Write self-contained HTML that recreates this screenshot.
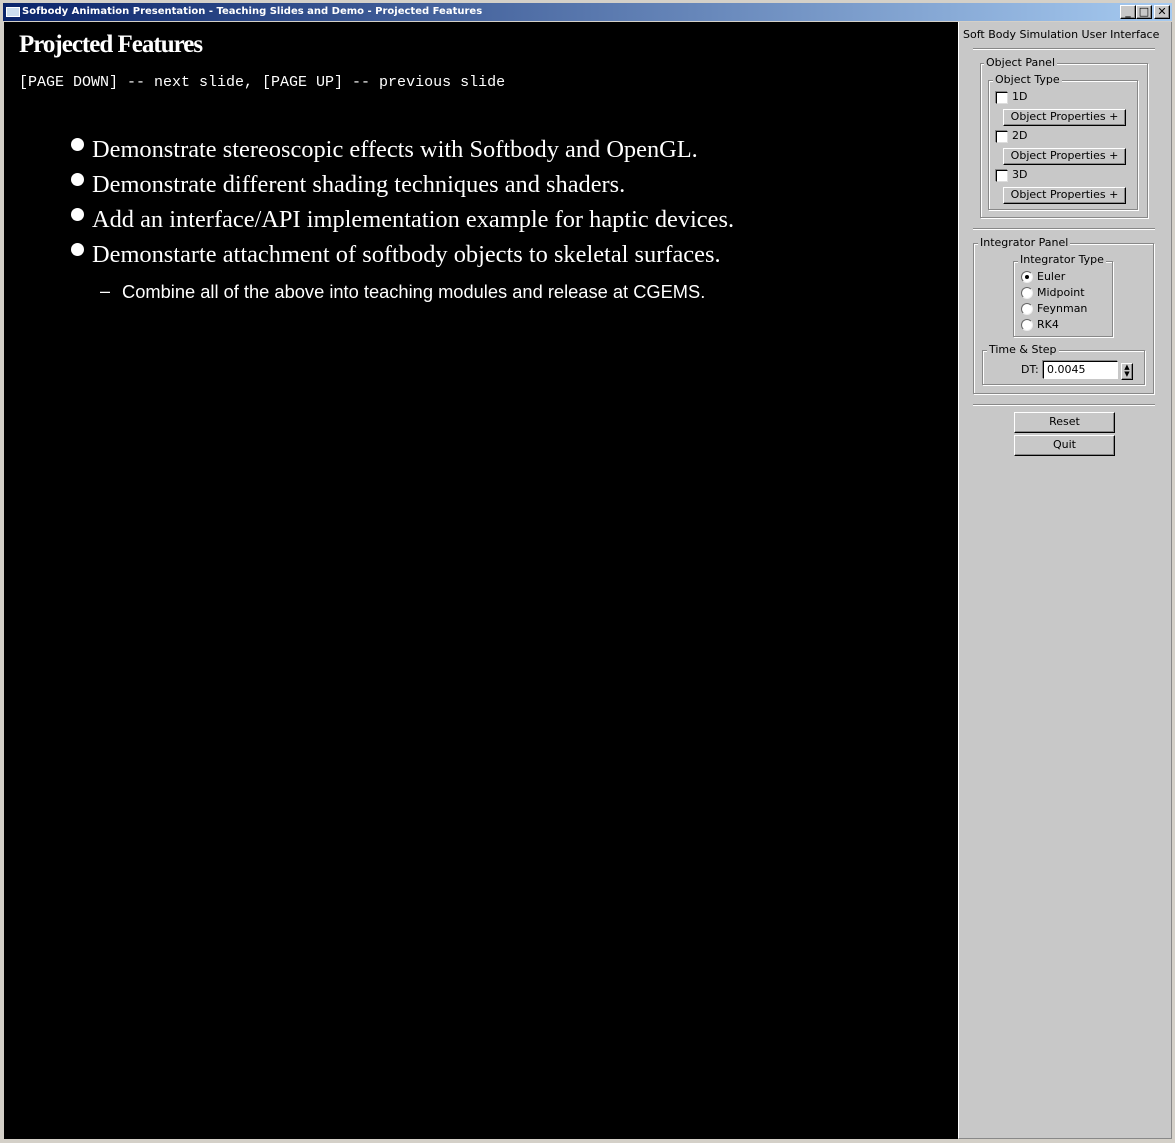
<!DOCTYPE html>
<html><head><meta charset="utf-8"><style>
*{margin:0;padding:0;box-sizing:border-box}
body{width:1175px;height:1143px;background:#d4d0c8;position:relative;overflow:hidden;font-family:"Liberation Sans",sans-serif}
.a{position:absolute}
.t{font-family:"DejaVu Sans",sans-serif;font-size:11px;color:#000;white-space:nowrap}
.fs{position:absolute;border:1px solid #888;box-shadow:1px 1px 0 #fff,inset 1px 1px 0 #fff}
.lg{position:absolute;background:#c8c8c8;padding:0 2px;font-family:"DejaVu Sans",sans-serif;font-size:11px;line-height:12px;white-space:nowrap}
.cb{position:absolute;width:12px;height:12px;background:#fff;border:1px solid #000;border-right-color:#ddd;border-bottom-color:#ddd;box-shadow:-1px -1px 0 #888}
.btn{position:absolute;background:#c8c8c8;border:1px solid;border-color:#fff #000 #000 #fff;box-shadow:inset -1px -1px 0 #888;font-family:"DejaVu Sans",sans-serif;font-size:11px;text-align:center;line-height:18px;white-space:nowrap}
.rd{position:absolute;width:12px;height:12px;border-radius:50%;background:#fff;border:1px solid #666;border-right-color:#eee;border-bottom-color:#eee}
.b{position:absolute;color:#fff;font-family:"Liberation Serif",serif;font-size:24.4px;white-space:nowrap}
.dot{position:absolute;width:13px;height:13px;border-radius:50%;background:#fff}
</style></head><body>
<div class="a" style="left:3px;top:3px;width:1169px;height:18px;background:linear-gradient(90deg,#0a246a,#a6caf0)"></div>
<div class="a" style="left:6px;top:7px;width:14px;height:10px;background:#cde;border:1px solid #fff"></div>
<div class="a" style="left:22px;top:6px;color:#fff;font-family:'DejaVu Sans',sans-serif;font-weight:bold;font-size:10px;white-space:nowrap">Sofbody Animation Presentation - Teaching Slides and Demo - Projected Features</div>
<div class="btn" style="left:1120px;top:5px;width:16px;height:14px;line-height:12px;font-weight:bold">_</div>
<div class="btn" style="left:1136px;top:5px;width:16px;height:14px;line-height:12px">□</div>
<div class="btn" style="left:1154px;top:5px;width:16px;height:14px;line-height:12px;font-weight:bold">✕</div>
<div class="a" style="left:4px;top:22px;width:954px;height:1117px;background:#000"></div>
<div class="a" style="left:958px;top:22px;width:214px;height:1117px;background:#c8c8c8;border-left:1px solid #fff;border-right:1px solid #888;border-bottom:1px solid #888"></div>
<div class="a" style="left:19px;top:31px;color:#fff;font-family:'Liberation Serif',serif;font-weight:bold;font-size:25px;letter-spacing:-1px;white-space:nowrap">Projected Features</div>
<div class="a" style="left:19px;top:74px;color:#fff;font-family:'Liberation Mono',monospace;font-size:15px;white-space:nowrap">[PAGE DOWN] -- next slide, [PAGE UP] -- previous slide</div>
<div class="dot" style="left:71px;top:138px"></div><div class="b" style="left:92px;top:136px">Demonstrate stereoscopic effects with Softbody and OpenGL.</div>
<div class="dot" style="left:71px;top:173px"></div><div class="b" style="left:92px;top:171px">Demonstrate different shading techniques and shaders.</div>
<div class="dot" style="left:71px;top:208px"></div><div class="b" style="left:92px;top:206px">Add an interface/API implementation example for haptic devices.</div>
<div class="dot" style="left:71px;top:243px"></div><div class="b" style="left:92px;top:241px">Demonstarte attachment of softbody objects to skeletal surfaces.</div>
<div class="a" style="left:100px;top:281px;color:#fff;font-size:18px;white-space:nowrap">–</div>
<div class="a" style="left:122px;top:281px;color:#fff;font-size:18.3px;white-space:nowrap">Combine all of the above into teaching modules and release at CGEMS.</div>

<div class="t a" style="left:963px;top:28px">Soft Body Simulation User Interface</div>
<div class="a" style="left:973px;top:48px;width:182px;height:2px;border-top:1px solid #888;border-bottom:1px solid #fff"></div>
<div class="fs" style="left:980px;top:63px;width:168px;height:155px"></div>
<div class="lg" style="left:984px;top:57px">Object Panel</div>
<div class="fs" style="left:988px;top:80px;width:150px;height:130px"></div>
<div class="lg" style="left:993px;top:74px">Object Type</div>
<div class="cb" style="left:996px;top:92px"></div><div class="t a" style="left:1012px;top:90px">1D</div>
<div class="btn" style="left:1003px;top:109px;width:123px;height:17px;line-height:14px">Object Properties +</div>
<div class="cb" style="left:996px;top:131px"></div><div class="t a" style="left:1012px;top:129px">2D</div>
<div class="btn" style="left:1003px;top:148px;width:123px;height:17px;line-height:14px">Object Properties +</div>
<div class="cb" style="left:996px;top:170px"></div><div class="t a" style="left:1012px;top:168px">3D</div>
<div class="btn" style="left:1003px;top:187px;width:123px;height:17px;line-height:14px">Object Properties +</div>
<div class="a" style="left:973px;top:228px;width:182px;height:2px;border-top:1px solid #888;border-bottom:1px solid #fff"></div>
<div class="fs" style="left:973px;top:243px;width:181px;height:151px"></div>
<div class="lg" style="left:978px;top:237px">Integrator Panel</div>
<div class="fs" style="left:1013px;top:261px;width:100px;height:76px"></div>
<div class="lg" style="left:1018px;top:254px">Integrator Type</div>
<div class="rd" style="left:1021px;top:271px"></div><div class="a" style="left:1025px;top:275px;width:4px;height:4px;background:#000;border-radius:50%"></div><div class="t a" style="left:1037px;top:270px">Euler</div>
<div class="rd" style="left:1021px;top:287px"></div><div class="t a" style="left:1037px;top:286px">Midpoint</div>
<div class="rd" style="left:1021px;top:303px"></div><div class="t a" style="left:1037px;top:302px">Feynman</div>
<div class="rd" style="left:1021px;top:319px"></div><div class="t a" style="left:1037px;top:318px">RK4</div>
<div class="fs" style="left:982px;top:350px;width:163px;height:35px"></div>
<div class="lg" style="left:987px;top:344px">Time &amp; Step</div>
<div class="t a" style="left:1021px;top:363px">DT:</div>
<div class="a t" style="left:1043px;top:361px;width:75px;height:18px;background:#fff;border:1px solid #000;border-right-color:#fff;border-bottom-color:#fff;box-shadow:-1px -1px 0 #888;padding:1px 3px">0.0045</div>
<div class="btn" style="left:1121px;top:363px;width:12px;height:17px;font-size:7px;line-height:7px">▲<br>▼</div>
<div class="a" style="left:973px;top:404px;width:182px;height:2px;border-top:1px solid #888;border-bottom:1px solid #fff"></div>
<div class="btn" style="left:1014px;top:412px;width:101px;height:21px">Reset</div>
<div class="btn" style="left:1014px;top:435px;width:101px;height:21px">Quit</div>
</body></html>
